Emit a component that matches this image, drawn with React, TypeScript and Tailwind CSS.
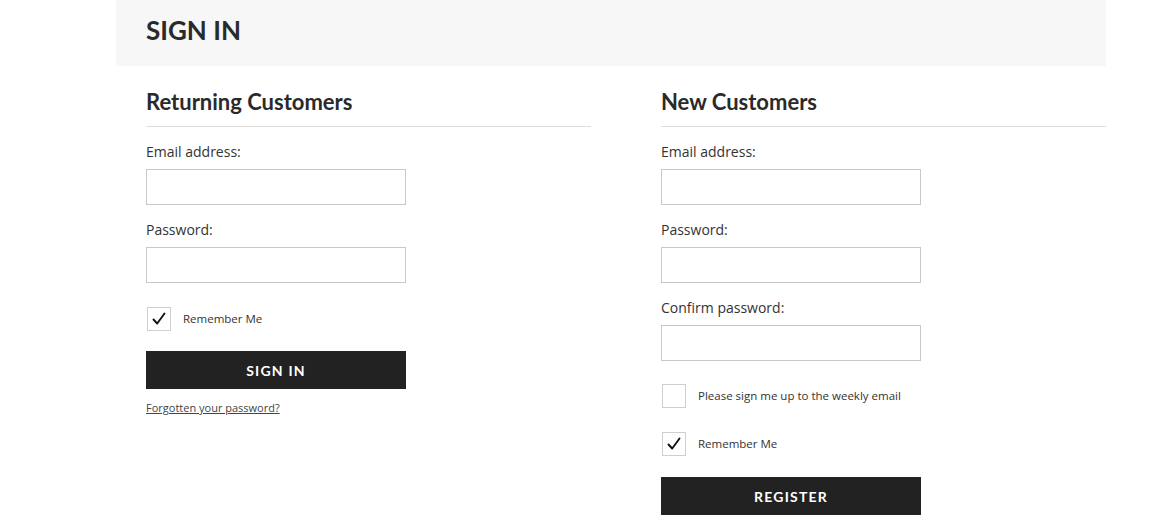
import { useState } from 'react';

const heading = { fontFamily: 'Lato, "Noto Sans", "Liberation Sans", sans-serif' };
const body = { fontFamily: '"Open Sans", "Liberation Sans", sans-serif' };

function Field({ label, type = 'text' }: { label: string; type?: string }) {
  return (
    <div className="mt-[15px]">
      <label className="block text-[14px] leading-[20px] text-[#333]" style={body}>
        {label}
      </label>
      <input
        type={type}
        className="mt-[7px] block h-[36px] w-[260px] border border-[#c8c8c8] bg-white px-2 outline-none"
      />
    </div>
  );
}

function Check({ label, initial, className }: { label: string; initial: boolean; className?: string }) {
  const [on, setOn] = useState(initial);
  return (
    <label className={`flex items-center cursor-pointer ${className ?? ''}`}>
      <span
        onClick={() => setOn(!on)}
        className="ml-px flex h-[24px] w-[24px] items-center justify-center border border-[#cfcfcf] bg-white"
      >
        {on && (
          <svg width="16" height="16" viewBox="0 0 16 16" fill="none">
            <path d="M2.5 8.5 L6.2 12.5 L13.5 2.5" stroke="#111" strokeWidth="1.9" strokeLinecap="round" strokeLinejoin="round" />
          </svg>
        )}
      </span>
      <span className="ml-[12px] text-[11.5px] text-[#333]" style={body}>
        {label}
      </span>
    </label>
  );
}

function Button({ children, className }: { children: string; className?: string }) {
  return (
    <button
      className={`block h-[38px] w-[260px] bg-[#222] text-[14px] font-bold tracking-[1.2px] text-white ${className ?? ''}`}
      style={heading}
    >
      {children}
    </button>
  );
}

function SectionTitle({ children }: { children: string }) {
  return (
    <h2
      className="border-b border-[#dedede] pb-[10px] text-[22px] font-bold leading-[28px] text-[#2a2a2a]"
      style={heading}
    >
      {children}
    </h2>
  );
}

export default function App() {
  return (
    <div className="min-h-[529px] bg-white">
      <div className="ml-[116px] w-[990px]">
        <div className="flex h-[66px] items-center bg-[#f7f7f7] px-[30px] pb-[6px]">
          <h1 className="text-[26px] font-bold text-[#2a2a2a]" style={heading}>
            SIGN IN
          </h1>
        </div>

        <div className="ml-[30px] mt-[22px] grid grid-cols-[445px_445px] gap-x-[70px]">
          <div>
            <SectionTitle>Returning Customers</SectionTitle>
            <Field label="Email address:" type="email" />
            <Field label="Password:" type="password" />
            <Check label="Remember Me" initial={true} className="mt-[24px]" />
            <Button className="mt-[20px]">SIGN IN</Button>
            <a
              href="#"
              className="mt-[12px] block text-[11px] leading-[14px] text-[#444] underline"
              style={body}
            >
              Forgotten your password?
            </a>
          </div>

          <div>
            <SectionTitle>New Customers</SectionTitle>
            <Field label="Email address:" type="email" />
            <Field label="Password:" type="password" />
            <Field label="Confirm password:" type="password" />
            <Check label="Please sign me up to the weekly email" initial={false} className="mt-[23px]" />
            <Check label="Remember Me" initial={true} className="mt-[24px]" />
            <Button className="mt-[21px]">REGISTER</Button>
          </div>
        </div>
      </div>
    </div>
  );
}
